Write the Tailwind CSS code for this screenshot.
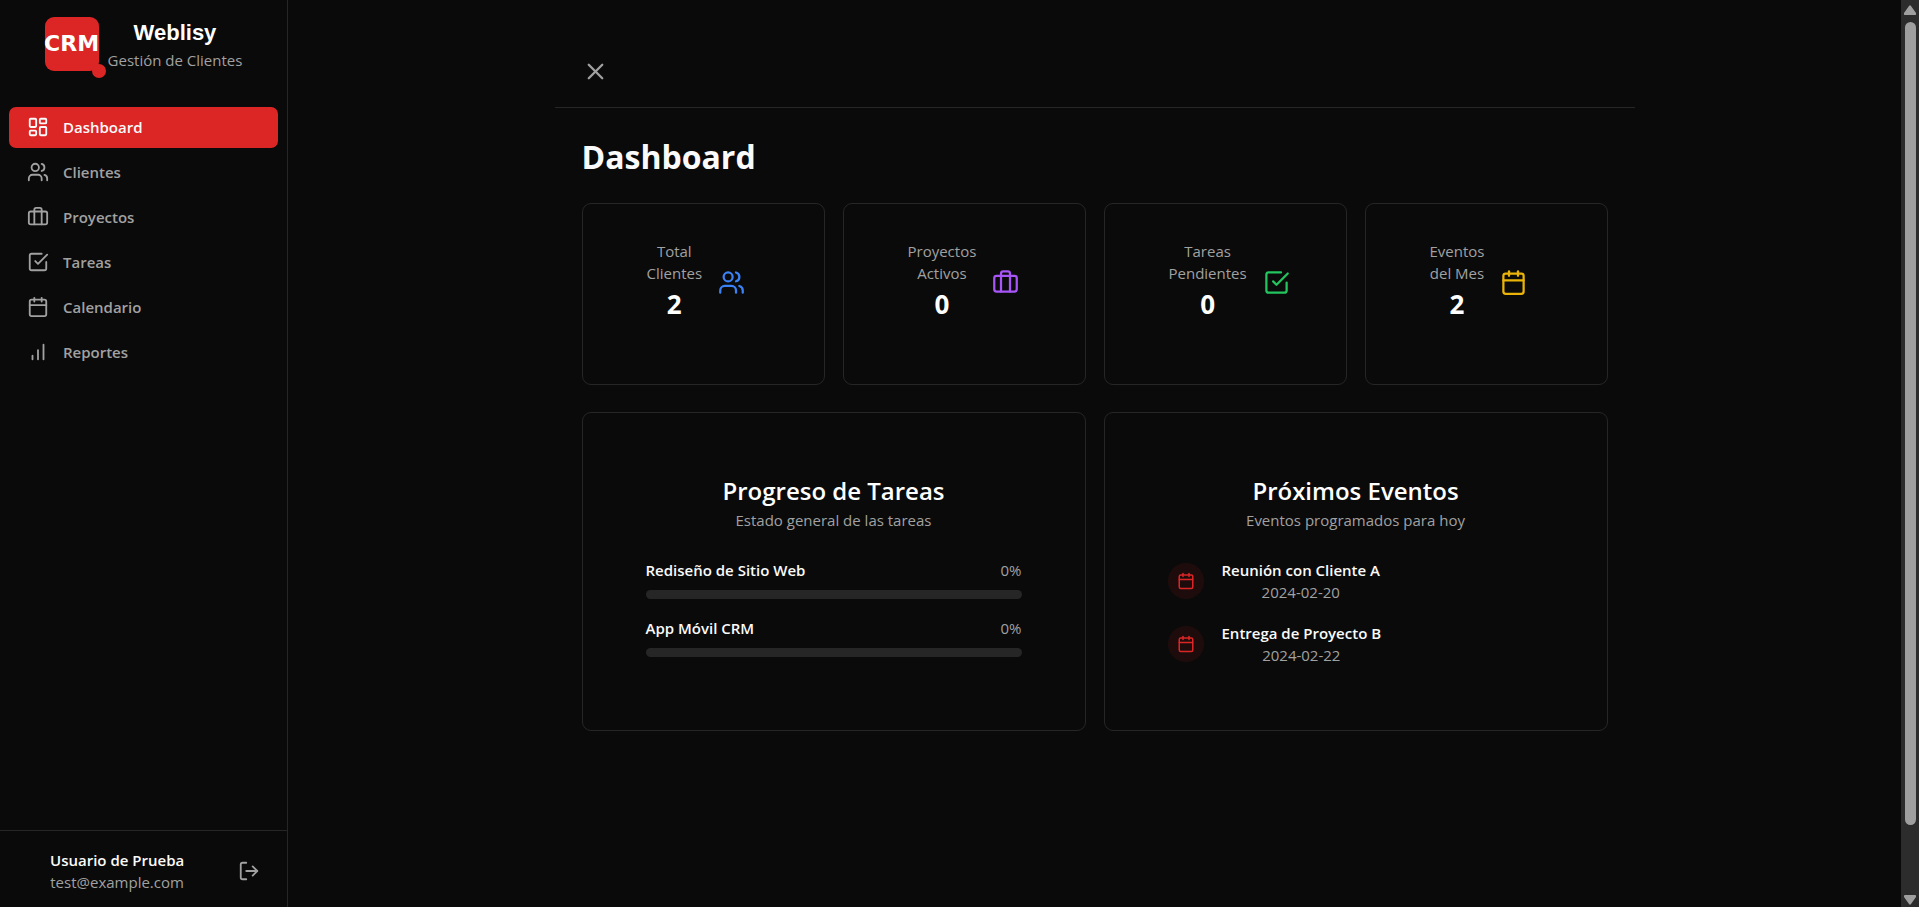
<!DOCTYPE html>
<html lang="es">
<head>
<meta charset="utf-8">
<title>Weblisy CRM</title>
<script src="https://cdn.jsdelivr.net/npm/@tailwindcss/browser@4"></script>
</head>
<body class="bg-[#0a0a0a] font-['Open_Sans','Noto_Sans',sans-serif] text-[15px] leading-[22px] text-[#a1a1a1]">
<svg class="hidden" aria-hidden="true">
  <symbol id="grid" viewBox="0 0 24 24"><rect x="3" y="3" width="7" height="9" rx="1"/><rect x="14" y="3" width="7" height="5" rx="1"/><rect x="14" y="12" width="7" height="9" rx="1"/><rect x="3" y="16" width="7" height="5" rx="1"/></symbol>
  <symbol id="users" viewBox="0 0 24 24"><path d="M16 21v-2a4 4 0 0 0-4-4H6a4 4 0 0 0-4 4v2"/><circle cx="9" cy="7" r="4"/><path d="M22 21v-2a4 4 0 0 0-3-3.87"/><path d="M16 3.13a4 4 0 0 1 0 7.75"/></symbol>
  <symbol id="case" viewBox="0 0 24 24"><path d="M16 20V4a2 2 0 0 0-2-2h-4a2 2 0 0 0-2 2v16"/><rect x="2" y="6" width="20" height="14" rx="2"/></symbol>
  <symbol id="check" viewBox="0 0 24 24"><path d="m9 11 3 3L22 4"/><path d="M21 12v7a2 2 0 0 1-2 2H5a2 2 0 0 1-2-2V5a2 2 0 0 1 2-2h11"/></symbol>
  <symbol id="cal" viewBox="0 0 24 24"><path d="M8 2v4"/><path d="M16 2v4"/><rect x="3" y="4" width="18" height="18" rx="2"/><path d="M3 10h18"/></symbol>
  <symbol id="bars" viewBox="0 0 24 24"><path d="M12 20V10"/><path d="M18 20V4"/><path d="M6 20v-4"/></symbol>
  <symbol id="exit" viewBox="0 0 24 24"><path d="M9 21H5a2 2 0 0 1-2-2V5a2 2 0 0 1 2-2h4"/><path d="m16 17 5-5-5-5"/><path d="M21 12H9"/></symbol>
  <symbol id="close" viewBox="0 0 24 24"><path d="M18 6 6 18"/><path d="m6 6 12 12"/></symbol>
</svg>
<div class="flex h-screen">
  <aside class="flex w-72 shrink-0 flex-col border-r border-[#262626]">
    <div class="flex h-[90px] justify-center pt-[17px]">
      <div class="relative flex size-[54px] items-center justify-center rounded-[9px] bg-[#dc2626] font-['DejaVu_Sans',sans-serif] text-[22px] font-bold text-white">
        <span>CRM</span>
        <span class="absolute -right-[7px] -bottom-[7px] size-[14px] rounded-full bg-[#dc2626]"></span>
      </div>
      <div class="ml-[9px] text-center">
        <h2 class="font-['Liberation_Sans',Arial,sans-serif] text-[22px] leading-[32px] font-bold text-white">Weblisy</h2>
        <p>Gestión de Clientes</p>
      </div>
    </div>
    <nav class="flex grow flex-col gap-1 px-[9px] pt-[17px] font-semibold">
      <a href="#" class="flex h-[41px] items-center gap-[14px] rounded-[7px] bg-[#dc2626] px-[18px] pb-px text-neutral-50"><svg class="size-[22px] fill-none stroke-current stroke-2" stroke-linecap="round" stroke-linejoin="round"><use href="#grid"/></svg>Dashboard</a>
      <a href="#" class="flex h-[41px] items-center gap-[14px] px-[18px] pb-px"><svg class="size-[22px] fill-none stroke-current stroke-2" stroke-linecap="round" stroke-linejoin="round"><use href="#users"/></svg>Clientes</a>
      <a href="#" class="flex h-[41px] items-center gap-[14px] px-[18px] pb-px"><svg class="size-[22px] fill-none stroke-current stroke-2" stroke-linecap="round" stroke-linejoin="round"><use href="#case"/></svg>Proyectos</a>
      <a href="#" class="flex h-[41px] items-center gap-[14px] px-[18px] pb-px"><svg class="size-[22px] fill-none stroke-current stroke-2" stroke-linecap="round" stroke-linejoin="round"><use href="#check"/></svg>Tareas</a>
      <a href="#" class="flex h-[41px] items-center gap-[14px] px-[18px] pb-px"><svg class="size-[22px] fill-none stroke-current stroke-2" stroke-linecap="round" stroke-linejoin="round"><use href="#cal"/></svg>Calendario</a>
      <a href="#" class="flex h-[41px] items-center gap-[14px] px-[18px] pb-px"><svg class="size-[22px] fill-none stroke-current stroke-2" stroke-linecap="round" stroke-linejoin="round"><use href="#bars"/></svg>Reportes</a>
    </nav>
    <div class="flex items-center justify-between border-t border-[#262626] pt-[18px] pr-[27px] pb-[14px] pl-[50px]">
      <div class="text-center"><p class="font-semibold text-neutral-50">Usuario de Prueba</p><p>test@example.com</p></div>
      <button aria-label="Cerrar sesión"><svg class="size-[22px] fill-none stroke-current stroke-2" stroke-linecap="round" stroke-linejoin="round"><use href="#exit"/></svg></button>
    </div>
  </aside>
  <main class="min-w-0 grow overflow-hidden">
    <div class="mx-auto max-w-[1080px]">
      <header class="flex h-[108px] items-center border-b border-[#262626] px-[27px] pt-9">
        <button aria-label="Cerrar menú"><svg class="size-[27px] fill-none stroke-current stroke-2" stroke-linecap="round" stroke-linejoin="round"><use href="#close"/></svg></button>
      </header>
      <div class="px-[27px] pt-[26px]">
        <h1 class="text-[32px] leading-[45px] font-bold text-neutral-50">Dashboard</h1>
        <div class="mt-6 grid grid-cols-4 gap-[18px] font-medium">
          <section class="flex items-center gap-4 rounded-[9px] border border-[#262626] pt-9 pb-[60px] pl-16">
            <div class="text-center"><p>Total<br>Clientes</p><p class="text-[26px] leading-[40px] font-bold text-white">2</p></div>
            <svg class="size-[27px] fill-none stroke-[#3b82f6] stroke-2" stroke-linecap="round" stroke-linejoin="round"><use href="#users"/></svg>
          </section>
          <section class="flex items-center gap-4 rounded-[9px] border border-[#262626] pt-9 pb-[60px] pl-16">
            <div class="text-center"><p>Proyectos<br>Activos</p><p class="text-[26px] leading-[40px] font-bold text-white">0</p></div>
            <svg class="size-[27px] fill-none stroke-[#a855f7] stroke-2" stroke-linecap="round" stroke-linejoin="round"><use href="#case"/></svg>
          </section>
          <section class="flex items-center gap-4 rounded-[9px] border border-[#262626] pt-9 pb-[60px] pl-16">
            <div class="text-center"><p>Tareas<br>Pendientes</p><p class="text-[26px] leading-[40px] font-bold text-white">0</p></div>
            <svg class="size-[27px] fill-none stroke-[#22c55e] stroke-2" stroke-linecap="round" stroke-linejoin="round"><use href="#check"/></svg>
          </section>
          <section class="flex items-center gap-4 rounded-[9px] border border-[#262626] pt-9 pb-[60px] pl-16">
            <div class="text-center"><p>Eventos<br>del Mes</p><p class="text-[26px] leading-[40px] font-bold text-white">2</p></div>
            <svg class="size-[27px] fill-none stroke-[#eab308] stroke-2" stroke-linecap="round" stroke-linejoin="round"><use href="#cal"/></svg>
          </section>
        </div>
        <div class="mt-[27px] grid grid-cols-2 gap-[18px]">
          <section class="rounded-[9px] border border-[#262626] px-[63px] pt-[62px] pb-[72px]">
            <h3 class="mb-[2px] text-center text-[24px] leading-[32px] font-semibold text-white">Progreso de Tareas</h3>
            <p class="text-center">Estado general de las tareas</p>
            <div class="mt-7">
              <div class="flex justify-between"><span id="t1" class="font-semibold text-neutral-50">Rediseño de Sitio Web</span><span>0%</span></div>
              <div role="progressbar" aria-labelledby="t1" aria-valuenow="0" class="mt-[9px] h-[9px] rounded-full bg-[#262626]"></div>
            </div>
            <div class="mt-[18px]">
              <div class="flex justify-between"><span id="t2" class="font-semibold text-neutral-50">App Móvil CRM</span><span>0%</span></div>
              <div role="progressbar" aria-labelledby="t2" aria-valuenow="0" class="mt-[9px] h-[9px] rounded-full bg-[#262626]"></div>
            </div>
          </section>
          <section class="rounded-[9px] border border-[#262626] px-[63px] pt-[62px] pb-16">
            <h3 class="mb-[2px] text-center text-[24px] leading-[32px] font-semibold text-white">Próximos Eventos</h3>
            <p class="text-center">Eventos programados para hoy</p>
            <div class="mt-7 flex items-center gap-[18px]">
              <div class="flex size-9 items-center justify-center rounded-full bg-[#dc2626]/10"><svg class="size-[18px] fill-none stroke-[#dc2626] stroke-2" stroke-linecap="round" stroke-linejoin="round"><use href="#cal"/></svg></div>
              <div class="text-center"><p class="font-semibold text-neutral-50">Reunión con Cliente A</p><p>2024-02-20</p></div>
            </div>
            <div class="mt-[19px] flex items-center gap-[18px]">
              <div class="flex size-9 items-center justify-center rounded-full bg-[#dc2626]/10"><svg class="size-[18px] fill-none stroke-[#dc2626] stroke-2" stroke-linecap="round" stroke-linejoin="round"><use href="#cal"/></svg></div>
              <div class="text-center"><p class="font-semibold text-neutral-50">Entrega de Proyecto B</p><p>2024-02-22</p></div>
            </div>
          </section>
        </div>
      </div>
    </div>
  </main>
  <div class="flex w-[18px] shrink-0 flex-col items-center bg-[#2c2c2c] pt-[5px] pb-[2px]" aria-hidden="true">
    <svg class="h-[10px] w-3 fill-[#9f9f9f]" viewBox="0 0 12 10"><path d="M5 1q1-1.500 2 0l5 7q.5 2-1 2H1q-1.500 0-1-2z"/></svg>
    <div class="mt-[7px] mb-[70px] w-[11px] grow rounded-full bg-[#9f9f9f]"></div>
    <svg class="h-[10px] w-3 fill-[#9f9f9f]" viewBox="0 0 12 10"><path d="M5 9q1 1.500 2 0l5-7q.5-2-1-2H1q-1.500 0-1 2z"/></svg>
  </div>
</div>
</body>
</html>
